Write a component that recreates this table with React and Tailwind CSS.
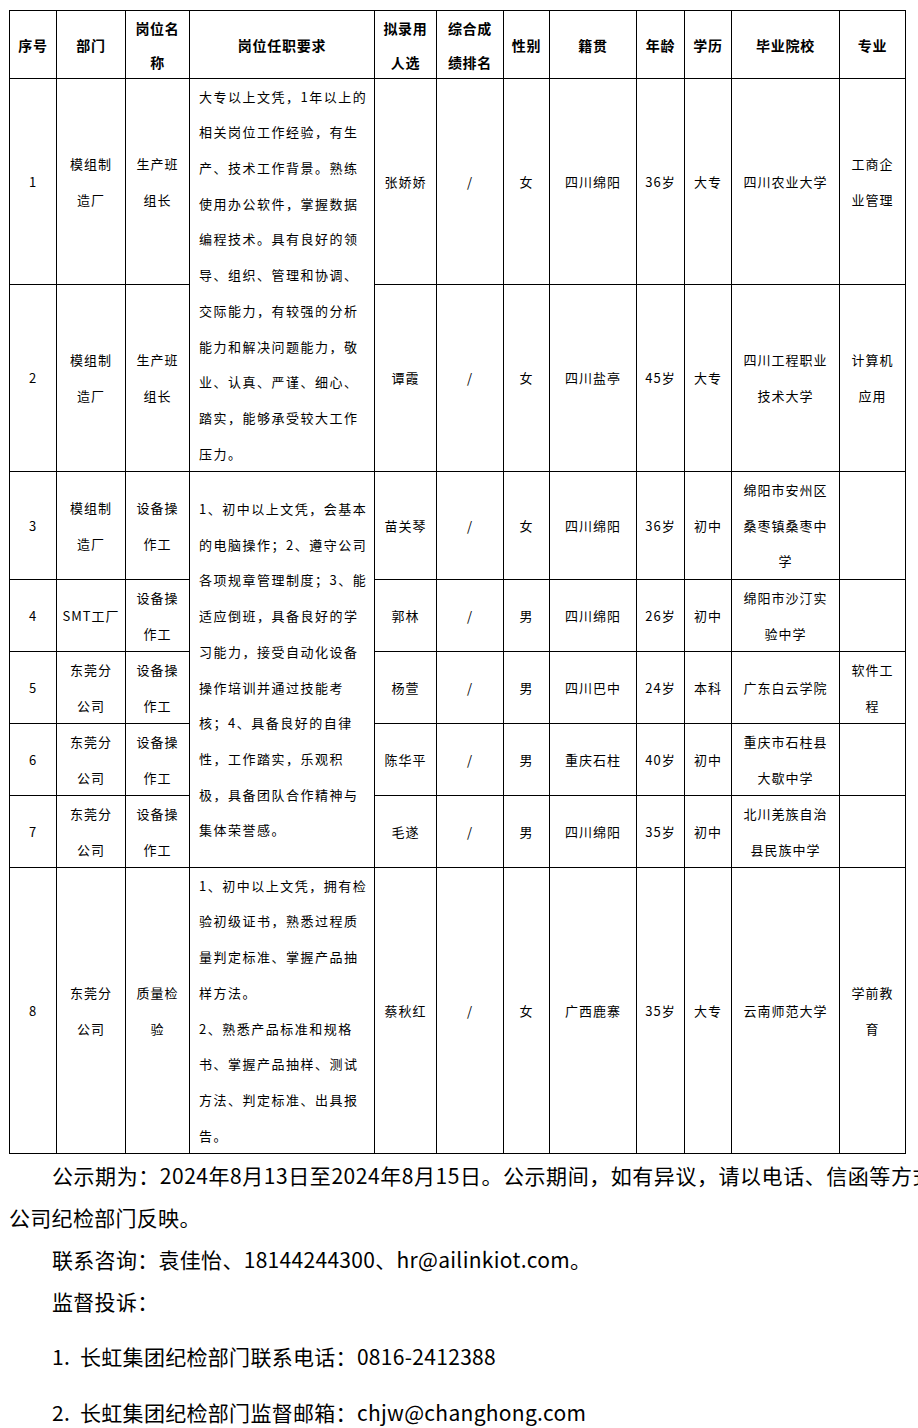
import React from "react";

const header = [
  ["序号"],
  ["部门"],
  ["岗位名", "称"],
  ["岗位任职要求"],
  ["拟录用", "人选"],
  ["综合成", "绩排名"],
  ["性别"],
  ["籍贯"],
  ["年龄"],
  ["学历"],
  ["毕业院校"],
  ["专业"],
];

const reqA = [
  "大专以上文凭，1年以上的",
  "相关岗位工作经验，有生",
  "产、技术工作背景。熟练",
  "使用办公软件，掌握数据",
  "编程技术。具有良好的领",
  "导、组织、管理和协调、",
  "交际能力，有较强的分析",
  "能力和解决问题能力，敬",
  "业、认真、严谨、细心、",
  "踏实，能够承受较大工作",
  "压力。",
];

const reqB = [
  "1、初中以上文凭，会基本",
  "的电脑操作；2、遵守公司",
  "各项规章管理制度；3、能",
  "适应倒班，具备良好的学",
  "习能力，接受自动化设备",
  "操作培训并通过技能考",
  "核；4、具备良好的自律",
  "性，工作踏实，乐观积",
  "极，具备团队合作精神与",
  "集体荣誉感。",
];

const reqC = [
  "1、初中以上文凭，拥有检",
  "验初级证书，熟悉过程质",
  "量判定标准、掌握产品抽",
  "样方法。",
  "2、熟悉产品标准和规格",
  "书、掌握产品抽样、测试",
  "方法、判定标准、出具报",
  "告。",
];

const rows = [
  { no: "1", dept: ["模组制", "造厂"], pos: ["生产班", "组长"], req: { lines: reqA, span: 2 }, name: "张娇娇", sex: "女", origin: "四川绵阳", age: "36岁", edu: "大专", school: ["四川农业大学"], major: ["工商企", "业管理"] },
  { no: "2", dept: ["模组制", "造厂"], pos: ["生产班", "组长"], name: "谭霞", sex: "女", origin: "四川盐亭", age: "45岁", edu: "大专", school: ["四川工程职业", "技术大学"], major: ["计算机", "应用"] },
  { no: "3", dept: ["模组制", "造厂"], pos: ["设备操", "作工"], req: { lines: reqB, span: 5 }, name: "苗关琴", sex: "女", origin: "四川绵阳", age: "36岁", edu: "初中", school: ["绵阳市安州区", "桑枣镇桑枣中", "学"], major: [] },
  { no: "4", dept: ["SMT工厂"], pos: ["设备操", "作工"], name: "郭林", sex: "男", origin: "四川绵阳", age: "26岁", edu: "初中", school: ["绵阳市沙汀实", "验中学"], major: [] },
  { no: "5", dept: ["东莞分", "公司"], pos: ["设备操", "作工"], name: "杨萱", sex: "男", origin: "四川巴中", age: "24岁", edu: "本科", school: ["广东白云学院"], major: ["软件工", "程"] },
  { no: "6", dept: ["东莞分", "公司"], pos: ["设备操", "作工"], name: "陈华平", sex: "男", origin: "重庆石柱", age: "40岁", edu: "初中", school: ["重庆市石柱县", "大歇中学"], major: [] },
  { no: "7", dept: ["东莞分", "公司"], pos: ["设备操", "作工"], name: "毛遂", sex: "男", origin: "四川绵阳", age: "35岁", edu: "初中", school: ["北川羌族自治", "县民族中学"], major: [] },
  { no: "8", dept: ["东莞分", "公司"], pos: ["质量检", "验"], req: { lines: reqC, span: 1 }, name: "蔡秋红", sex: "女", origin: "广西鹿寨", age: "35岁", edu: "大专", school: ["云南师范大学"], major: ["学前教", "育"] },
];

function Cell({ lines }) {
  return (
    <div className="bg-white flex flex-col items-center justify-center text-center text-[13px] tracking-[1px] leading-[35.7px] text-black">
      {lines.map((l, i) => (
        <div key={i} className="whitespace-nowrap">
          {l}
        </div>
      ))}
    </div>
  );
}

function ReqCell({ lines, span }) {
  const spanClass = span === 2 ? "row-span-2" : span === 5 ? "row-span-5" : "";
  return (
    <div className={`bg-white flex flex-col items-start justify-center pl-[9px] text-[13px] tracking-[1.5px] leading-[35.7px] text-black ${spanClass}`}>
      {lines.map((l, i) => (
        <div key={i} className="whitespace-nowrap">
          {l}
        </div>
      ))}
    </div>
  );
}

export default function App() {
  return (
    <div className="w-[918px] min-h-[1428px] overflow-hidden bg-white text-black font-['Noto_Sans_CJK_SC','Noto_Sans',sans-serif]">
      <div className="pt-[10px] pl-[9px]">
        <div className="inline-grid bg-black p-px gap-px grid-cols-[46px_68px_63px_184px_61px_66px_45px_86px_47px_46px_107px_65px] grid-rows-[67px_205px_186px_107px_71px_71px_71px_71px_285px]">
          {header.map((h, i) => (
            <div key={i} className="bg-white flex flex-col items-center justify-center text-center text-[14px] font-bold tracking-[0.75px] leading-[34px]">
              {h.map((l, j) => (
                <div key={j} className="whitespace-nowrap">
                  {l}
                </div>
              ))}
            </div>
          ))}
          {rows.map((r, i) => (
            <React.Fragment key={i}>
              <Cell lines={[r.no]} />
              <Cell lines={r.dept} />
              <Cell lines={r.pos} />
              {r.req && <ReqCell lines={r.req.lines} span={r.req.span} />}
              <Cell lines={[r.name]} />
              <Cell lines={["/"]} />
              <Cell lines={[r.sex]} />
              <Cell lines={[r.origin]} />
              <Cell lines={[r.age]} />
              <Cell lines={[r.edu]} />
              <Cell lines={r.school} />
              <Cell lines={r.major} />
            </React.Fragment>
          ))}
        </div>
      </div>
      <div className="pl-[9px] text-[21px] tracking-[0.3px] leading-[42px] text-black">
        <div className="pl-[43px] whitespace-nowrap tracking-[0.55px]">
          公示期为：2024年8月13日至2024年8月15日。公示期间，如有异议，请以电话、信函等方式向
        </div>
        <div className="whitespace-nowrap">公司纪检部门反映。</div>
        <div className="pl-[43px] whitespace-nowrap">联系咨询：袁佳怡、18144244300、hr@ailinkiot.com。</div>
        <div className="pl-[43px] whitespace-nowrap">监督投诉：</div>
        <div className="pl-[43px] mt-[13px] whitespace-nowrap flex">
          <span className="w-[28px] shrink-0">1.</span>
          <span>长虹集团纪检部门联系电话：0816-2412388</span>
        </div>
        <div className="pl-[43px] mt-[14px] whitespace-nowrap flex">
          <span className="w-[28px] shrink-0">2.</span>
          <span>长虹集团纪检部门监督邮箱：chjw@changhong.com</span>
        </div>
      </div>
    </div>
  );
}
